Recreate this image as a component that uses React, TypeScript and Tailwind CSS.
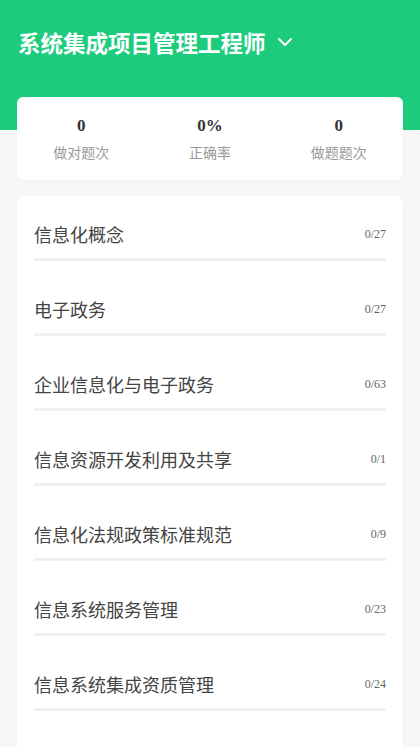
import { ChevronDown } from "lucide-react";

const chapters = [
  { name: "信息化概念", done: 0, total: 27 },
  { name: "电子政务", done: 0, total: 27 },
  { name: "企业信息化与电子政务", done: 0, total: 63 },
  { name: "信息资源开发利用及共享", done: 0, total: 1 },
  { name: "信息化法规政策标准规范", done: 0, total: 9 },
  { name: "信息系统服务管理", done: 0, total: 23 },
  { name: "信息系统集成资质管理", done: 0, total: 24 },
];

const stats = [
  { value: "0", label: "做对题次" },
  { value: "0%", label: "正确率" },
  { value: "0", label: "做题题次" },
];

const App = () => {
  return (
    <div
      className="relative h-[747px] overflow-hidden bg-[#f6f7f9]"
      style={{ fontFamily: '"Noto Sans CJK SC", "Noto Sans", sans-serif' }}
    >
      <header className="h-[130px] bg-[#1ccc7c] px-[18px] pt-[26px]">
        <div className="flex items-center gap-[7px] text-white">
          <h1 className="text-[22.5px] font-bold leading-[32px]">系统集成项目管理工程师</h1>
          <ChevronDown size={24} strokeWidth={2} />
        </div>
      </header>

      <div className="-mt-[33px] px-[17px]">
        <section className="grid h-[83px] grid-cols-3 rounded-[6px] bg-white shadow-[0_1px_4px_rgba(0,0,0,0.04)]">
          {stats.map((stat, i) => (
            <div key={i} className="flex flex-col items-center pt-[17px]">
              <span
                className="text-[17px] font-bold leading-[24px] text-[#333]"
                style={{ fontFamily: '"Liberation Serif", serif' }}
              >
                {stat.value}
              </span>
              <span className="mt-[4px] text-[14px] leading-[20px] text-[#999]">{stat.label}</span>
            </div>
          ))}
        </section>

        <section className="mt-[16px] min-h-[600px] rounded-[6px] bg-white shadow-[0_1px_4px_rgba(0,0,0,0.04)]">
          {chapters.map((chapter) => (
            <div key={chapter.name} className="px-[17px] pt-[26px] pb-[10px]">
              <div className="flex h-[24px] items-center justify-between">
                <span className="text-[18px] leading-[24px] text-[#444]">{chapter.name}</span>
                <span
                  className="text-[12px] text-[#666]"
                  style={{ fontFamily: '"Liberation Serif", serif' }}
                >
                  {chapter.done}/{chapter.total}
                </span>
              </div>
              <div className="mt-[12px] h-[3px] rounded-full bg-[#efeff4]">
                <div
                  className="h-full rounded-full bg-[#1ccc7c]"
                  style={{ width: `${(chapter.done / chapter.total) * 100}%` }}
                />
              </div>
            </div>
          ))}
        </section>
      </div>
    </div>
  );
};

export default App;
